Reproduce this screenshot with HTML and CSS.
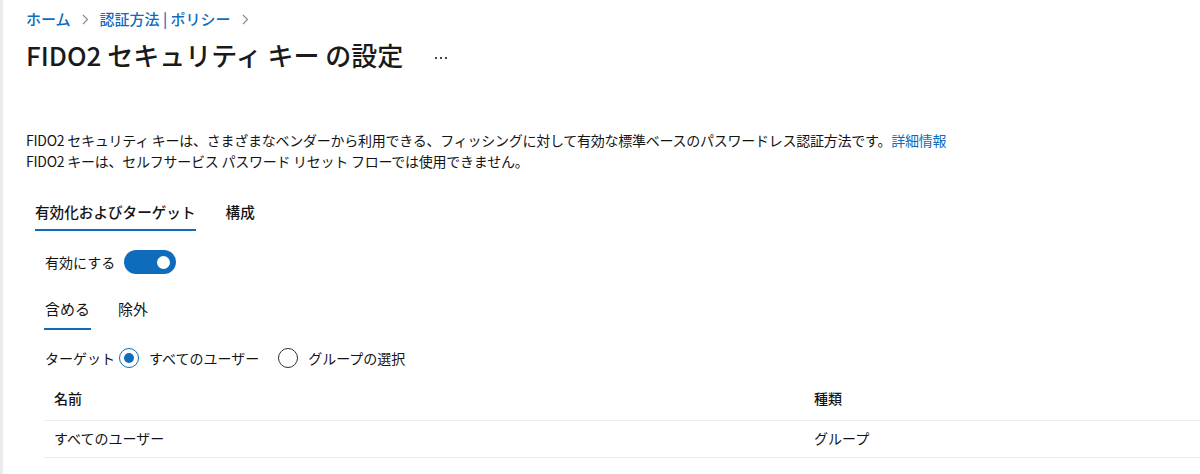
FILE: index.html
```html
<!DOCTYPE html>
<html lang="ja">
<head>
  <meta charset="UTF-8">
  <meta name="viewport" content="width=device-width, initial-scale=1.0">
  <title>FIDO2 セキュリティ キー の設定</title>
  <link rel="stylesheet" href="styles.css">
</head>
<body>
  <div class="page">
    <div class="crumbs">
      <a href="#">ホーム</a>
      <svg class="chev" width="7" height="11" viewBox="0 0 7 11"><path d="M1 1l4.5 4.5L1 10" fill="none" stroke="#8a8886" stroke-width="1.1"/></svg>
      <a href="#">認証方法 | ポリシー</a>
      <svg class="chev" width="7" height="11" viewBox="0 0 7 11"><path d="M1 1l4.5 4.5L1 10" fill="none" stroke="#8a8886" stroke-width="1.1"/></svg>
    </div>
    <div class="head">
      <h1>FIDO2 セキュリティ キー の設定</h1>
      <span class="more"><i></i><i></i><i></i></span>
    </div>

    <p class="desc">FIDO2 セキュリティ キーは、さまざまなベンダーから利用できる、フィッシングに対して有効な標準ベースのパスワードレス認証方法です。<a href="#">詳細情報</a><br>FIDO2 キーは、セルフサービス パスワード リセット フローでは使用できません。</p>

    <ul class="tabs">
      <li class="on">有効化およびターゲット</li>
      <li>構成</li>
    </ul>

    <div class="enable">
      <span>有効にする</span>
      <span class="toggle"><span class="knob"></span></span>
    </div>

    <ul class="subtabs">
      <li class="on">含める</li>
      <li>除外</li>
    </ul>

    <div class="target">
      <span class="label">ターゲット</span>
      <label class="radio"><span class="dot on"></span>すべてのユーザー</label>
      <label class="radio"><span class="dot"></span>グループの選択</label>
    </div>

    <div class="grid">
      <div class="row hdr">
        <div class="cell name">名前</div>
        <div class="cell">種類</div>
      </div>
      <div class="row">
        <div class="cell name">すべてのユーザー</div>
        <div class="cell">グループ</div>
      </div>
    </div>
  </div>
</body>
</html>
```

FILE: styles.css
```css
* {
  margin: 0;
  padding: 0;
  list-style: none;
  box-sizing: border-box;
}
body {
  font-family: "Noto Sans CJK JP", "Noto Sans", sans-serif;
  font-size: 14px;
  line-height: 20px;
  color: #141414;
  background: #fff;
  border-left: 3px solid #ebebeb;
  min-height: 474px;
}
a {
  color: #0f6cbd;
  text-decoration: none;
}
.page {
  padding: 9px 0 0 23px;
}
.crumbs {
  display: flex;
  align-items: center;
  gap: 11px;
  height: 20px;
  font-size: 15px;
}
.crumbs a {
  font-weight: 500;
}
.chev {
  display: block;
}
.head {
  display: flex;
  align-items: center;
  margin-top: 10px;
  height: 32px;
}
h1 {
  font-size: 26px;
  line-height: 32px;
  font-weight: 500;
  color: #1a1a1a;
}
.more {
  display: flex;
  gap: 3px;
  margin: 6px 0 0 32px;
}
.more i {
  width: 2px;
  height: 2px;
  background: #444;
}
.desc {
  margin-top: 59px;
  line-height: 21px;
  letter-spacing: -0.25px;
}
.tabs {
  display: flex;
  gap: 30px;
  margin: 22px 0 0 9px;
  font-size: 14.6px;
}
.tabs li,
.subtabs li {
  padding: 8px 0 7px;
  border-bottom: 2px solid transparent;
  font-weight: 500;
}
.tabs li.on,
.subtabs li.on {
  border-bottom-color: #0f6cbd;
}
.enable {
  display: flex;
  align-items: center;
  gap: 9px;
  margin: 19px 0 0 19px;
}
.toggle {
  width: 52px;
  height: 24px;
  border-radius: 12px;
  background: #0f6cbd;
  display: flex;
  align-items: center;
  justify-content: flex-end;
  padding-right: 6px;
}
.knob {
  width: 13px;
  height: 13px;
  border-radius: 50%;
  background: #fff;
}
.subtabs {
  display: flex;
  gap: 26px;
  margin: 25px 0 0 18px;
  font-size: 15px;
}
.subtabs li {
  padding: 0 1px 9px;
  font-weight: 400;
}
.target {
  display: flex;
  align-items: center;
  margin: 18px 0 0 19px;
  height: 20px;
}
.label {
  margin-right: 4px;
}
.radio {
  display: flex;
  align-items: center;
  gap: 10px;
  margin-right: 19px;
}
.dot {
  width: 20px;
  height: 20px;
  border-radius: 50%;
  border: 1px solid #323130;
  display: flex;
  align-items: center;
  justify-content: center;
}
.dot.on {
  border-color: #0f6cbd;
}
.dot.on::after {
  content: "";
  width: 10px;
  height: 10px;
  border-radius: 50%;
  background: #0f6cbd;
}
.grid {
  margin: 12px 0 0 18px;
}
.row {
  display: flex;
  border-bottom: 1px solid #ededed;
  padding: 7px 0 9px;
}
.row.hdr {
  padding: 8px 0 12px;
}
.row.hdr .cell {
  font-weight: 500;
}
.cell {
  padding-left: 10px;
}
.cell.name {
  width: 760px;
}
```
